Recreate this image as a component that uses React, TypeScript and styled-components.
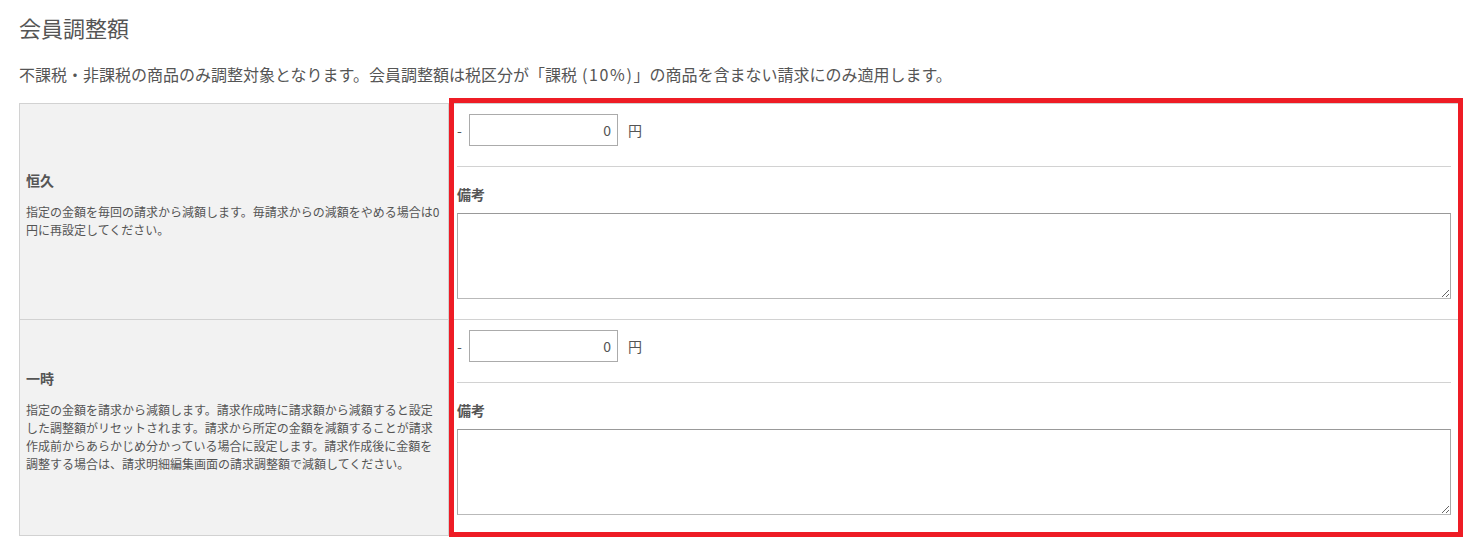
import React from "react";
import styled, { createGlobalStyle } from "styled-components";

const GlobalStyle = createGlobalStyle`
  html, body {
    margin: 0;
    padding: 0;
    background: #ffffff;
  }
  body {
    font-family: "Noto Sans CJK JP", "Noto Sans", sans-serif;
    color: #555555;
  }
  * { box-sizing: border-box; }
`;

const Page = styled.div`
  padding: 12px 16px 16px 19px;
`;

const Title = styled.h2`
  margin: 0;
  font-size: 22px;
  font-weight: 400;
  line-height: 30px;
  color: #555555;
`;

const Lead = styled.p`
  margin: 20px 0 17px;
  font-size: 16px;
  line-height: 24px;
  color: #555555;
`;

const Latin = styled.span`
  letter-spacing: 1.6px;
`;

const TableWrap = styled.div`
  position: relative;
`;

const Table = styled.div`
  display: grid;
  grid-template-columns: 429px 1fr;
  border: 1px solid #d2d2d2;
  width: 1441px;
`;

const LabelCell = styled.div<{ $last?: boolean }>`
  background: #f2f2f2;
  border-right: 1px solid #d2d2d2;
  border-bottom: ${(p) => (p.$last ? "none" : "1px solid #d2d2d2")};
  padding: 0 6px;
  display: flex;
  flex-direction: column;
  justify-content: center;
`;

const LabelTitle = styled.div`
  font-size: 14px;
  font-weight: 700;
  line-height: 20px;
  color: #555555;
  margin-bottom: 13px;
`;

const LabelDesc = styled.p`
  margin: 0 0 14px;
  font-size: 12px;
  line-height: 18px;
  color: #555555;
`;

const ValueCell = styled.div<{ $last?: boolean }>`
  border-bottom: ${(p) => (p.$last ? "none" : "1px solid #d2d2d2")};
  padding: 10px 8px 20px;
`;

const AmountRow = styled.div`
  display: flex;
  align-items: center;
  padding-bottom: 20px;
  border-bottom: 1px solid #d2d2d2;
  font-size: 14px;
  color: #555555;
`;

const Minus = styled.span`
  width: 11px;
  font-size: 14px;
`;

const AmountInput = styled.input`
  width: 149px;
  height: 32px;
  margin-left: 1px;
  border: 1px solid #ababab;
  padding: 0 6px;
  text-align: right;
  font-family: "Noto Sans CJK JP", "Noto Sans", sans-serif;
  font-size: 14px;
  color: #555555;
  background: #ffffff;
  outline: none;
`;

const Unit = styled.span`
  margin-left: 10px;
  font-size: 14px;
`;

const NoteLabel = styled.div`
  margin: 17px 0 9px;
  font-size: 14px;
  font-weight: 700;
  line-height: 20px;
  color: #555555;
`;

const NoteArea = styled.textarea`
  display: block;
  width: 100%;
  height: 86px;
  border: 1px solid #a9a9a9;
  border-top-color: #999999;
  border-bottom-color: #b9b9b9;
  font-family: "Noto Sans CJK JP", "Noto Sans", sans-serif;
  font-size: 14px;
  color: #555555;
  background: #ffffff;
  outline: none;
  margin: 0;
`;

const Highlight = styled.div`
  position: absolute;
  top: -5px;
  left: 430px;
  right: -3px;
  bottom: -1px;
  border: 5px solid #ee1c25;
  pointer-events: none;
`;

type Row = { title: string; desc: string };

const rows: Row[] = [
  {
    title: "恒久",
    desc: "指定の金額を毎回の請求から減額します。毎請求からの減額をやめる場合は0円に再設定してください。",
  },
  {
    title: "一時",
    desc: "指定の金額を請求から減額します。請求作成時に請求額から減額すると設定した調整額がリセットされます。請求から所定の金額を減額することが請求作成前からあらかじめ分かっている場合に設定します。請求作成後に金額を調整する場合は、請求明細編集画面の請求調整額で減額してください。",
  },
];

export default function App() {
  return (
    <>
      <GlobalStyle />
      <Page>
        <Title>会員調整額</Title>
        <Lead>
          不課税・非課税の商品のみ調整対象となります。会員調整額は税区分が「課税<Latin> (10%)</Latin>」の商品を含まない請求にのみ適用します。
        </Lead>
        <TableWrap>
          <Table>
            {rows.map((r, i) => {
              const last = i === rows.length - 1;
              return (
                <React.Fragment key={r.title}>
                  <LabelCell $last={last}>
                    <LabelTitle>{r.title}</LabelTitle>
                    <LabelDesc>{r.desc}</LabelDesc>
                  </LabelCell>
                  <ValueCell $last={last}>
                    <AmountRow>
                      <Minus>-</Minus>
                      <AmountInput type="text" defaultValue="0" />
                      <Unit>円</Unit>
                    </AmountRow>
                    <NoteLabel>備考</NoteLabel>
                    <NoteArea />
                  </ValueCell>
                </React.Fragment>
              );
            })}
          </Table>
          <Highlight />
        </TableWrap>
      </Page>
    </>
  );
}
